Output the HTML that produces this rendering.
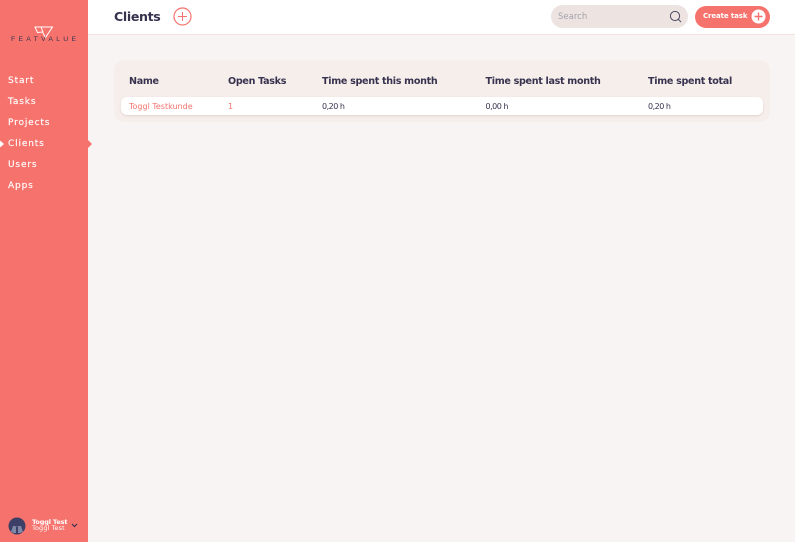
<!DOCTYPE html>
<html><head><meta charset="utf-8">
<style>
html,body{margin:0;padding:0;width:795px;height:542px;overflow:hidden;background:#f8f4f3;font-family:"DejaVu Sans","Liberation Sans",sans-serif;}
.t{position:absolute;white-space:nowrap;line-height:1;}
.nav{color:#fff;font-size:9px;letter-spacing:.85px;left:8px;font-weight:400;-webkit-text-stroke:.15px #fff}
.th{color:#37334f;font-size:9.6px;font-weight:700;top:76.5px;letter-spacing:-.32px}
.td{color:#37334f;font-size:8px;top:102.5px;letter-spacing:-.5px}
.red{color:#f5736d;letter-spacing:0}
</style></head><body>
<div style="position:absolute;left:0;top:0;width:88px;height:542px;background:#f6726c"></div>
<div style="position:absolute;left:88px;top:0;width:707px;height:34px;background:#fff;border-bottom:1px solid #f3e2de"></div>

<svg style="position:absolute;left:34px;top:25px" width="20" height="14" viewBox="0 0 20 14" fill="none" stroke="#fff" stroke-width="1"><path d="M1 2H18.5L11.5 12.5L8.5 7L3.5 7.5Z"/><path d="M7 2L9 7"/></svg>
<div class="t" style="left:11px;top:37px;font-size:6.8px;letter-spacing:3.3px;color:#37334f;font-family:'Liberation Sans',sans-serif">FEATVALUE</div>

<div class="t nav" style="top:77px">Start</div>
<div class="t nav" style="top:98px">Tasks</div>
<div class="t nav" style="top:119px">Projects</div>
<div class="t nav" style="top:140px">Clients</div>
<div class="t nav" style="top:161px">Users</div>
<div class="t nav" style="top:182px">Apps</div>
<svg style="position:absolute;left:0;top:139px" width="5" height="10"><path d="M0 1.5L4 5L0 8.5Z" fill="#fff"/></svg>
<svg style="position:absolute;left:88px;top:139px" width="5" height="10"><path d="M0 1L4 5L0 9Z" fill="#f6726c"/></svg>

<svg style="position:absolute;left:8px;top:517px" width="18" height="18" viewBox="0 0 18 18"><circle cx="9" cy="9" r="8.5" fill="#3d3f66"/><path d="M3 15L5 9H13L15 15L12 16H6Z" fill="#8088a8"/><circle cx="9" cy="7" r="2.6" fill="#3d3f66"/><path d="M8 10H10V16H8Z" fill="#3d3f66"/></svg>
<div class="t" style="left:32px;top:519px;color:#fff;font-size:6.5px;font-weight:700;letter-spacing:-.15px">Toggl Test</div>
<div class="t" style="left:32px;top:525px;color:#fff;font-size:6.5px;letter-spacing:.1px">Toggl Test</div>
<svg style="position:absolute;left:71px;top:523px" width="7" height="5" fill="none"><path d="M1 1L3.5 3.5L6 1" stroke="#37334f" stroke-width="1.2"/></svg>

<div class="t" style="left:114px;top:11px;font-size:12.6px;font-weight:700;color:#37334f;letter-spacing:-.35px">Clients</div>
<svg style="position:absolute;left:173px;top:7px" width="19" height="19" fill="none" stroke="#f6726c"><circle cx="9.5" cy="9.5" r="8.5" stroke-width="1.2"/><path d="M9.5 5V14M5 9.5H14" stroke-width="1"/></svg>

<div style="position:absolute;left:551px;top:5px;width:137px;height:23px;border-radius:12px;background:#ede3e0"></div>
<div class="t" style="left:558px;top:13px;font-size:8.5px;color:#a5a1ad;letter-spacing:0">Search</div>
<svg style="position:absolute;left:669px;top:10px" width="13" height="13" fill="none" stroke="#4c4a63" stroke-width="1"><circle cx="6" cy="6" r="4.6"/><path d="M9.4 9.4L12 12"/></svg>

<div style="position:absolute;left:695px;top:6px;width:75px;height:22px;border-radius:11px;background:#f6726c"></div>
<div class="t" style="left:703px;top:13px;font-size:7px;font-weight:700;color:#fff;letter-spacing:-.1px">Create task</div>
<svg style="position:absolute;left:751px;top:9px" width="15" height="15"><circle cx="7.5" cy="7.5" r="7" fill="#fff"/><path d="M7.5 3.5V11.5M3.5 7.5H11.5" stroke="#f6726c" stroke-width="1.4"/></svg>

<div style="position:absolute;left:114px;top:60px;width:656px;height:62px;border-radius:10px;background:#f6eeeb"></div>
<div style="position:absolute;left:121px;top:97px;width:642px;height:18px;border-radius:6px;background:#fff;box-shadow:0 1px 2px rgba(120,80,70,.16)"></div>

<div class="t th" style="left:129px">Name</div>
<div class="t th" style="left:228px">Open Tasks</div>
<div class="t th" style="left:322px">Time spent this month</div>
<div class="t th" style="left:485.5px">Time spent last month</div>
<div class="t th" style="left:648px">Time spent total</div>

<div class="t td red" style="left:129px">Toggl Testkunde</div>
<div class="t td red" style="left:228px">1</div>
<div class="t td" style="left:322px">0,20 h</div>
<div class="t td" style="left:485.5px">0,00 h</div>
<div class="t td" style="left:648px">0,20 h</div>
</body></html>
